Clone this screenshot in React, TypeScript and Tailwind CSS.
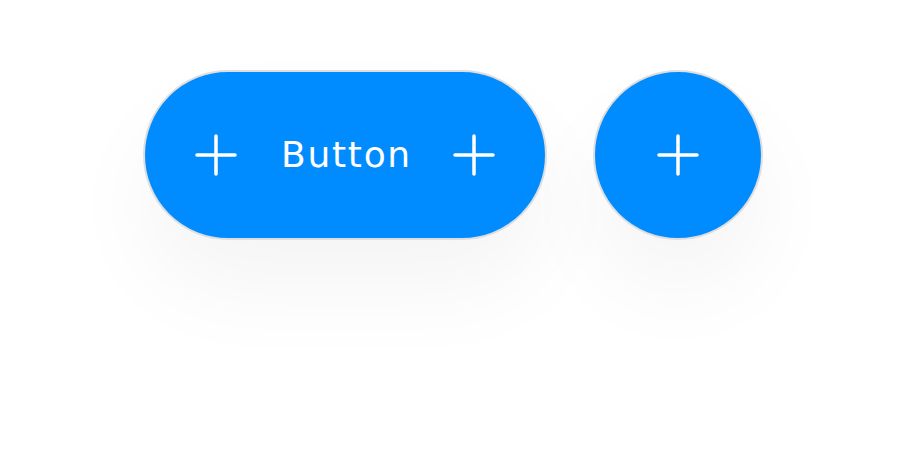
function PlusIcon() {
  return (
    <svg width="42" height="42" viewBox="0 0 42 42" fill="none" className="shrink-0">
      <path d="M2 21h38M21 2v38" stroke="white" strokeWidth="3.5" strokeLinecap="round" />
    </svg>
  );
}

export default function App() {
  return (
    <div className="w-[906px] h-[456px] bg-white flex justify-center items-start pt-[70px] gap-[46px] font-['DejaVu_Sans',sans-serif]">
      <button className="h-[170px] flex items-center rounded-full bg-[#008cff] border-2 border-[#dedede] pl-[50px] pr-[50px] shadow-[0_50px_90px_rgba(0,0,0,0.045)]">
        <PlusIcon />
        <span className="ml-[44px] mr-[41px] text-white text-[36px] leading-none tracking-[1.7px]">Button</span>
        <PlusIcon />
      </button>
      <button className="w-[170px] h-[170px] flex items-center justify-center rounded-full bg-[#008cff] border-2 border-[#dedede] shadow-[0_50px_90px_rgba(0,0,0,0.045)]">
        <PlusIcon />
      </button>
    </div>
  );
}
